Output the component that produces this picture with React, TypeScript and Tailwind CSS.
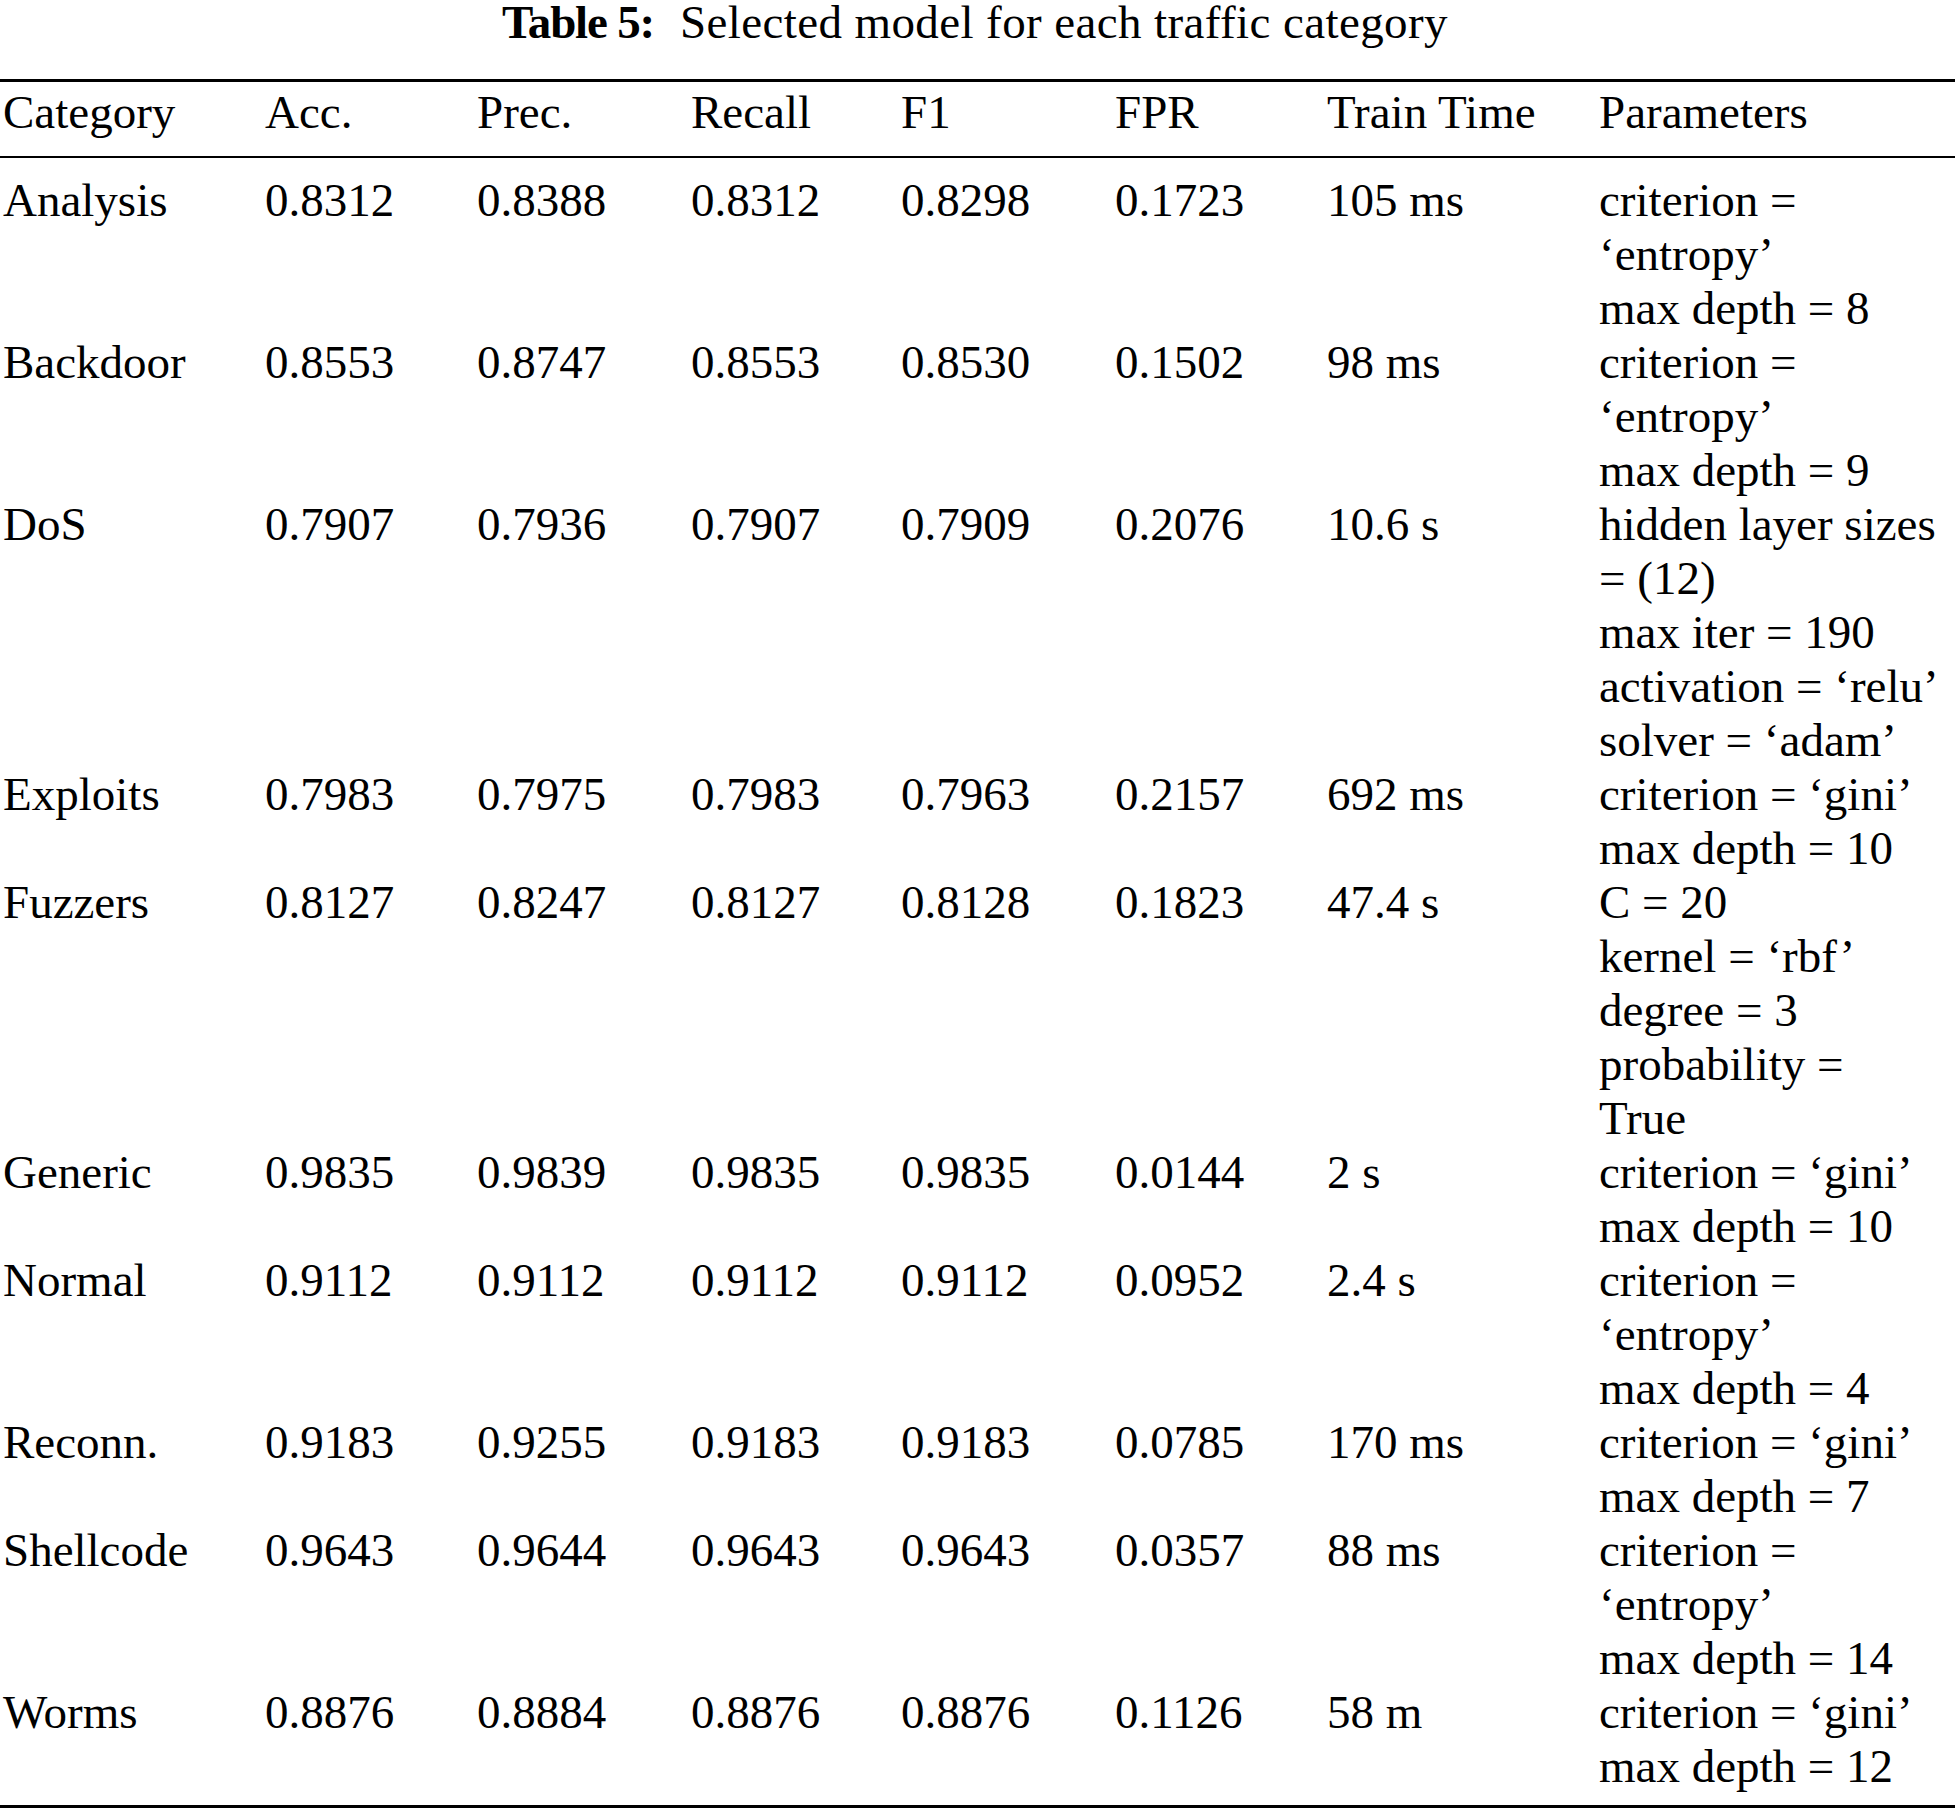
import React from "react";

type Row = { cat: string; v: string[]; time: string; params: string[] };

const rows: Row[] = [
  { cat: "Analysis", v: ["0.8312", "0.8388", "0.8312", "0.8298", "0.1723"], time: "105 ms", params: ["criterion =", "‘entropy’", "max depth = 8"] },
  { cat: "Backdoor", v: ["0.8553", "0.8747", "0.8553", "0.8530", "0.1502"], time: "98 ms", params: ["criterion =", "‘entropy’", "max depth = 9"] },
  { cat: "DoS", v: ["0.7907", "0.7936", "0.7907", "0.7909", "0.2076"], time: "10.6 s", params: ["hidden layer sizes", "= (12)", "max iter = 190", "activation = ‘relu’", "solver = ‘adam’"] },
  { cat: "Exploits", v: ["0.7983", "0.7975", "0.7983", "0.7963", "0.2157"], time: "692 ms", params: ["criterion = ‘gini’", "max depth = 10"] },
  { cat: "Fuzzers", v: ["0.8127", "0.8247", "0.8127", "0.8128", "0.1823"], time: "47.4 s", params: ["C = 20", "kernel = ‘rbf’", "degree = 3", "probability =", "True"] },
  { cat: "Generic", v: ["0.9835", "0.9839", "0.9835", "0.9835", "0.0144"], time: "2 s", params: ["criterion = ‘gini’", "max depth = 10"] },
  { cat: "Normal", v: ["0.9112", "0.9112", "0.9112", "0.9112", "0.0952"], time: "2.4 s", params: ["criterion =", "‘entropy’", "max depth = 4"] },
  { cat: "Reconn.", v: ["0.9183", "0.9255", "0.9183", "0.9183", "0.0785"], time: "170 ms", params: ["criterion = ‘gini’", "max depth = 7"] },
  { cat: "Shellcode", v: ["0.9643", "0.9644", "0.9643", "0.9643", "0.0357"], time: "88 ms", params: ["criterion =", "‘entropy’", "max depth = 14"] },
  { cat: "Worms", v: ["0.8876", "0.8884", "0.8876", "0.8876", "0.1126"], time: "58 m", params: ["criterion = ‘gini’", "max depth = 12"] },
];

const headers = ["Category", "Acc.", "Prec.", "Recall", "F1", "FPR", "Train Time", "Parameters"];

const gridCols = "grid grid-cols-[262px_212px_214px_210px_214px_212px_272px_1fr]";

export default function App() {
  return (
    <div className="bg-white w-[1958px] h-[1812px] text-black font-['Liberation_Serif','Times_New_Roman',serif] text-[47px] leading-[54px]">
      <div className="pt-[2px] leading-[40px] text-center pr-[8px] whitespace-nowrap">
        <span className="font-bold tracking-[-1.2px]">Table 5:</span>
        <span className="ml-[26px] tracking-[0.4px]">Selected model for each traffic category</span>
      </div>
      <div className="mt-[37px] w-[1955px] border-t-[3px] border-black">
        <div className={`${gridCols} pl-[3px] pt-[3px] pb-[17px]`}>
          {headers.map((h) => (
            <div key={h} className="whitespace-nowrap">{h}</div>
          ))}
        </div>
        <div className="border-t-2 border-black pl-[3px] pt-[15px] pb-[12px]">
          {rows.map((r) => (
            <div key={r.cat} className={gridCols}>
              <div className="whitespace-nowrap">{r.cat}</div>
              {r.v.map((x, i) => (
                <div key={i} className="whitespace-nowrap">{x}</div>
              ))}
              <div className="whitespace-nowrap">{r.time}</div>
              <div className="flex flex-col">
                {r.params.map((p, i) => (
                  <div key={i} className="whitespace-nowrap">{p}</div>
                ))}
              </div>
            </div>
          ))}
        </div>
        <div className="border-t-[3px] border-black" />
      </div>
    </div>
  );
}
